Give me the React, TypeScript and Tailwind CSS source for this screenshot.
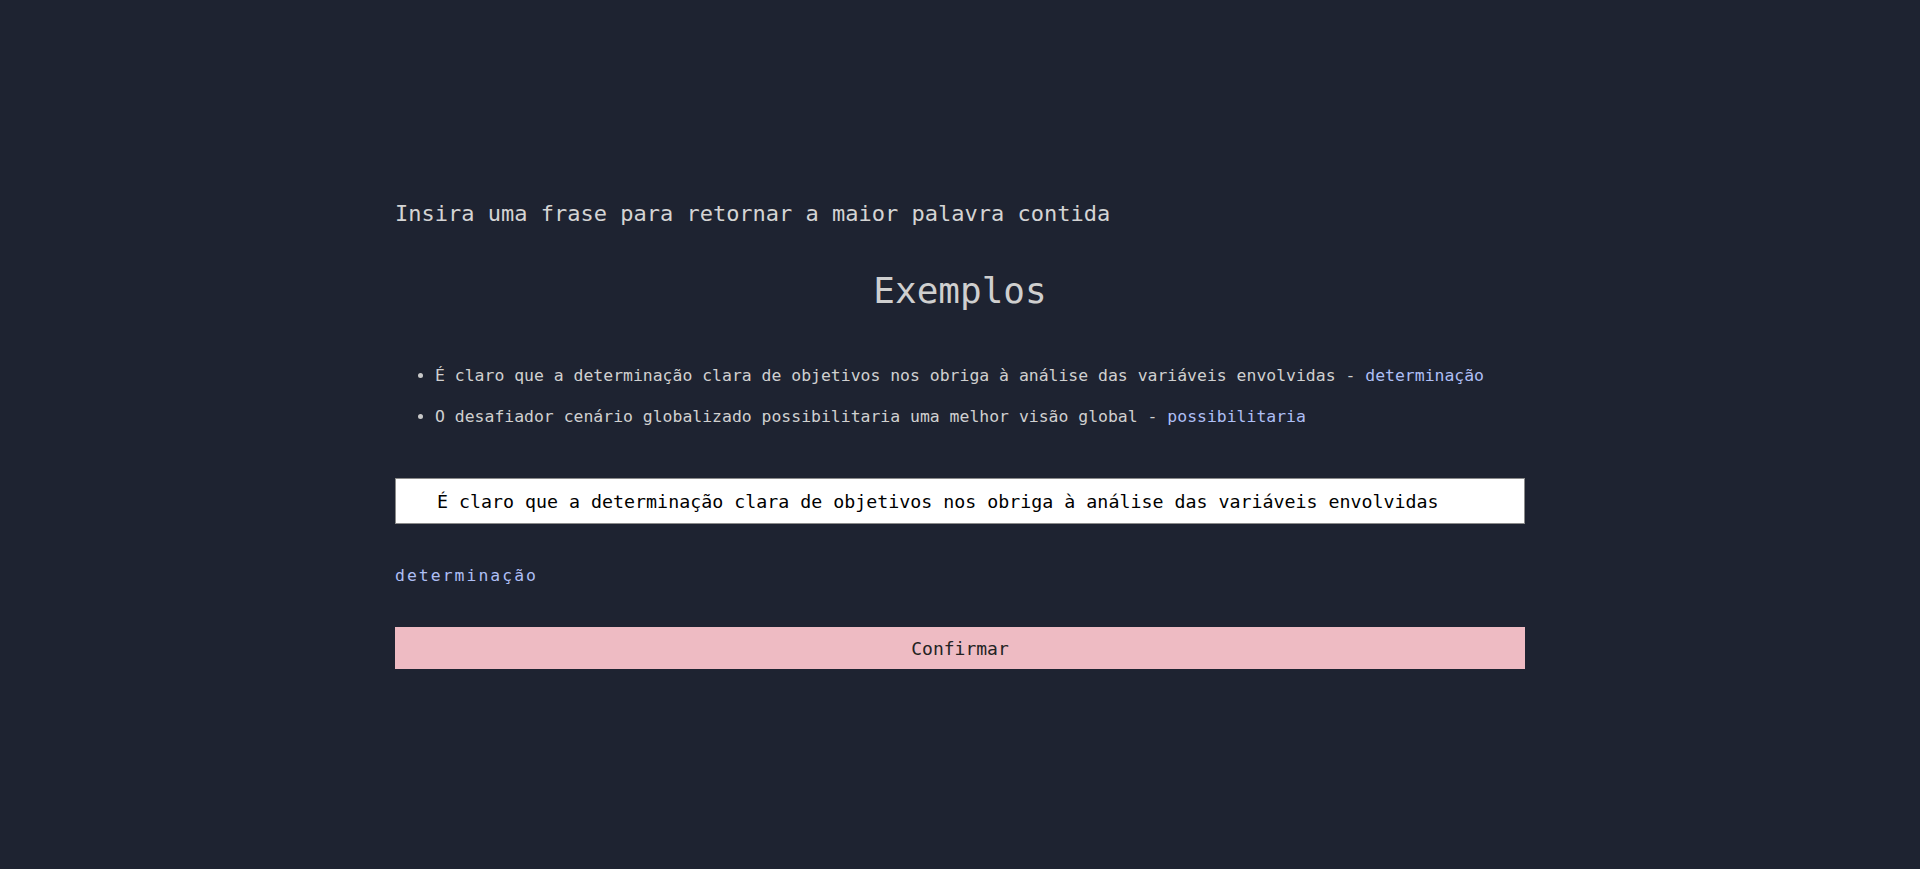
import React, { useState } from 'react';

const EXAMPLES = [
    {
        phrase: 'É claro que a determinação clara de objetivos nos obriga à análise das variáveis envolvidas',
        answer: 'determinação',
    },
    {
        phrase: 'O desafiador cenário globalizado possibilitaria uma melhor visão global',
        answer: 'possibilitaria',
    },
];

const longestWord = (text: string) =>
    text
        .split(/\s+/)
        .filter(Boolean)
        .reduce((best, word) => (word.length > best.length ? word : best), '');

const App: React.FC = () => {
    const [phrase, setPhrase] = useState(EXAMPLES[0].phrase);
    const [result, setResult] = useState(longestWord(EXAMPLES[0].phrase));

    return (
        <div className="min-h-[869px] w-full bg-[#1e2331] font-['DejaVu_Sans_Mono','Liberation_Mono',monospace]">
            <div className="mx-auto flex w-[1130px] flex-col pt-[198px]">
                {/* Header */}
                <h1 className="text-[22px] leading-[32px] text-[#d4d4d4]">
                    Insira uma frase para retornar a maior palavra contida
                </h1>
                <h2 className="mt-[39px] text-center text-[36px] leading-[44px] text-[#cfcfcf]">Exemplos</h2>

                {/* Examples */}
                <ul className="mt-[50px] flex list-disc flex-col gap-[15px] pl-[40px] text-[16.45px] leading-[26px] text-[#d0d0d0]">
                    {EXAMPLES.map((ex) => (
                        <li key={ex.answer} className="marker:text-[#c8c8c8]">
                            {ex.phrase} - <span className="text-[#aebff5]">{ex.answer}</span>
                        </li>
                    ))}
                </ul>

                {/* Input */}
                <input
                    type="text"
                    value={phrase}
                    onChange={(e) => setPhrase(e.target.value)}
                    className="mt-[48px] h-[46px] w-full border border-[#8a8a8a] bg-white pl-[41px] text-[18.3px] text-black outline-none"
                />

                <p className="mt-[38px] text-[16.4px] leading-[28px] tracking-[0.125em] text-[#aebff5]">{result}</p>

                <button
                    onClick={() => setResult(longestWord(phrase))}
                    className="mt-[37px] h-[42px] w-full bg-[#eebbc3] text-[18px] text-[#232323]"
                >
                    Confirmar
                </button>
            </div>
        </div>
    );
};

export default App;
